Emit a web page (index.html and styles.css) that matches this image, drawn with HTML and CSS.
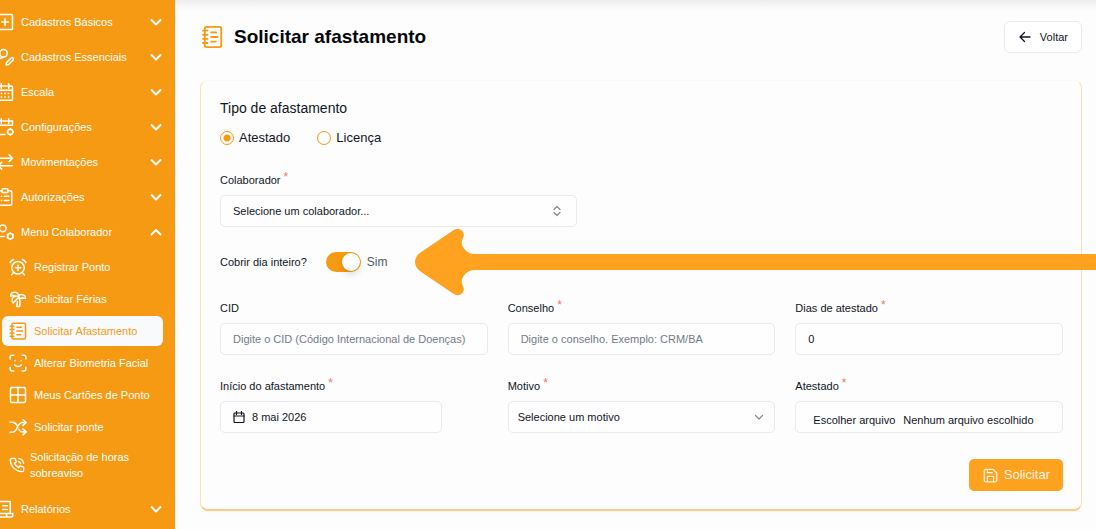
FILE: index.html
```html
<!DOCTYPE html>
<html lang="pt-BR">
<head>
<meta charset="utf-8">
<meta name="viewport" content="width=device-width, initial-scale=1">
<title>Solicitar afastamento</title>
<link rel="stylesheet" href="styles.css">
</head>
<body>
<div class="app">
  <nav class="sidebar" aria-label="Menu principal">
    <button class="group" type="button">
      <svg class="icon" viewBox="0 0 24 24"><rect x="2" y="2" width="20" height="20" rx="1.5"/><path d="M12 7.500v9M7.500 12h9"/></svg>
      <span class="group-name">Cadastros Básicos</span>
      <svg class="chevron" viewBox="0 0 12 12"><path d="M1.500 4l4.500 4.500L10.500 4"/></svg>
    </button>
    <button class="group" type="button">
      <svg class="icon" viewBox="0 0 24 24"><circle cx="10" cy="7" r="5"/><path d="M3 17c1-3 3-4 6-4"/><path d="M14 19.500l6-6a1.800 1.800 0 0 1 2.800 2.500l-6 6-3.300.8z"/></svg>
      <span class="group-name">Cadastros Essenciais</span>
      <svg class="chevron" viewBox="0 0 12 12"><path d="M1.500 4l4.500 4.500L10.500 4"/></svg>
    </button>
    <button class="group" type="button">
      <svg class="icon" viewBox="0 0 24 24"><rect x="2" y="4" width="20" height="19" rx="1.500"/><path d="M2 9.500h20M7 1v6M17 1v6M7 14h.6M11.700 14h.6M16.400 14h.6M7 18.500h.6M11.700 18.500h.6M16.400 18.500h.6"/></svg>
      <span class="group-name">Escala</span>
      <svg class="chevron" viewBox="0 0 12 12"><path d="M1.500 4l4.500 4.500L10.500 4"/></svg>
    </button>
    <button class="group" type="button">
      <svg class="icon" viewBox="0 0 24 24"><path d="M2 4h20v5.500H2zM2 9.500V22h10M7 1v6M17 1v6"/><circle cx="19" cy="18.500" r="3.400"/><path d="M19 14v1M19 22v1M14.800 18.500h.8M22.400 18.500h.8"/></svg>
      <span class="group-name">Configurações</span>
      <svg class="chevron" viewBox="0 0 12 12"><path d="M1.500 4l4.500 4.500L10.500 4"/></svg>
    </button>
    <button class="group" type="button">
      <svg class="icon" viewBox="0 0 24 24"><path d="M3 7h19M17.500 2.500L22 7l-4.500 4.500M22 17H3M7.500 12.500L3 17l4.500 4.500"/></svg>
      <span class="group-name">Movimentações</span>
      <svg class="chevron" viewBox="0 0 12 12"><path d="M1.500 4l4.500 4.500L10.500 4"/></svg>
    </button>
    <button class="group" type="button">
      <svg class="icon" viewBox="0 0 24 24"><path d="M8 3.500H5a2 2 0 0 0-2 2V21a2 2 0 0 0 2 2h14a2 2 0 0 0 2-2V5.500a2 2 0 0 0-2-2h-3"/><rect x="8" y="1" width="8" height="5" rx="1.500"/><path d="M7 11h.6M11 11h6M7 16.500h.6M11 16.500h6"/></svg>
      <span class="group-name">Autorizações</span>
      <svg class="chevron" viewBox="0 0 12 12"><path d="M1.500 4l4.500 4.500L10.500 4"/></svg>
    </button>
    <button class="group" type="button" aria-expanded="true">
      <svg class="icon" viewBox="0 0 24 24"><circle cx="9" cy="7" r="4.500"/><path d="M2 18h9"/><circle cx="19" cy="17.500" r="3.600"/><path d="M19 13v1M19 21v1M15 15.500l.8.500M22.200 19l.8.500M15 19.500l.8-.5M22.200 16l.8-.5"/></svg>
      <span class="group-name">Menu Colaborador</span>
      <svg class="chevron" viewBox="0 0 12 12"><path d="M1.500 8.500L6 4l4.500 4.500"/></svg>
    </button>
    <div class="submenu">
      <a class="item" href="#">
        <svg class="icon" viewBox="0 0 24 24"><circle cx="12" cy="13" r="8.300"/><path d="M12 9.500v7M8.500 13h7M1.500 6A10 10 0 0 1 6 2M22.500 6A10 10 0 0 0 18 2M6 19.500L3.500 22.500M18 19.500l2.500 3"/></svg>
        <span>Registrar Ponto</span>
      </a>
      <a class="item" href="#">
        <svg class="icon" viewBox="0 0 24 24"><path d="M13 8c0-2.760-2.460-5-5.500-5S2 5.240 2 8h2l1-1 1 1h4M13 7.140A5.820 5.820 0 0 1 16.500 6c3.040 0 5.500 2.240 5.500 5h-3l-1-1-1 1h-3M5.890 9.710c-2.150 2.150-2.300 5.470-.35 7.430l4.240-4.250.7-.7.710-.71 2.120-2.120c-1.950-1.960-5.270-1.800-7.420.35M11 15.500c.5 2.500-.17 4.500-1 6.500h4c2-5.500-.5-12-1-14"/></svg>
        <span>Solicitar Férias</span>
      </a>
      <a class="item item-active" href="#" aria-current="page">
        <svg class="icon" viewBox="0 0 24 24"><rect x="4" y="1.500" width="18" height="21" rx="2"/><path d="M1.500 5.500h5M1.500 10h5M1.500 14.500h5M1.500 19h5M10.500 7h6M10.500 12h7.500M10.500 17h5"/></svg>
        <span>Solicitar Afastamento</span>
      </a>
      <a class="item" href="#">
        <svg class="icon" viewBox="0 0 24 24"><path d="M1.500 6.500V4A2.500 2.500 0 0 1 4 1.500h2.500M17.500 1.500H20A2.500 2.500 0 0 1 22.500 4v2.500M22.500 17.500V20a2.500 2.500 0 0 1-2.500 2.500h-2.500M6.500 22.500H4A2.500 2.500 0 0 1 1.500 20v-2.500M7.500 14.500c2.500 3 6.500 3 9 0M8 9h.1M16 9h.1"/></svg>
        <span>Alterar Biometria Facial</span>
      </a>
      <a class="item" href="#">
        <svg class="icon" viewBox="0 0 24 24"><rect x="2" y="2" width="20" height="20" rx="2"/><path d="M12 2v20M2 12h20"/></svg>
        <span>Meus Cartões de Ponto</span>
      </a>
      <a class="item" href="#">
        <svg class="icon" viewBox="0 0 24 24"><path d="M18.500 2L23 6l-4.500 4M18.500 14.500l4.500 4-4.500 4M1.500 5.500h3c3 0 5 2 6 4M1.500 19h3C12 19 10 6 18 6h5M13 15c1 2 2.500 3.500 5 3.500h5"/></svg>
        <span>Solicitar ponte</span>
      </a>
      <a class="item item-tall" href="#">
        <svg class="icon icon-small" viewBox="0 0 24 24"><path d="M5 2h4l2 5.500-2.700 2A13 13 0 0 0 14.500 16l2-2.800 5.500 2v4.300a2.500 2.500 0 0 1-2.500 2.500C9.500 21.500 2.500 14 2 4.700A2.700 2.700 0 0 1 5 2zM14 6.500a5 5 0 0 1 3.500 3.500M14.500 2a9 9 0 0 1 7.500 7.500"/></svg>
        <span>Solicitação de horas sobreaviso</span>
      </a>
    </div>
    <button class="group" type="button">
      <svg class="icon" viewBox="0 0 24 24"><path d="M4 17V4a2 2 0 0 1 2-2h13v16M4 18h10v2a2.500 2.500 0 0 0 2.500 2.500H20a2.500 2.500 0 0 0 2.500-2.500v-2H14M16.500 22.500H5A3 3 0 0 1 2 19.500V18h2M9 7.500h6M9 12.500h6"/></svg>
      <span class="group-name">Relatórios</span>
      <svg class="chevron" viewBox="0 0 12 12"><path d="M1.500 4l4.500 4.500L10.500 4"/></svg>
    </button>
  </nav>

  <main class="main">
    <header class="header">
      <svg class="icon title-icon" viewBox="0 0 24 24"><rect x="3" y="1" width="18" height="22" rx="2"/><path d="M1 5h5M1 9.500h5M1 14h5M1 18.500h5M10 7h5.500M10 12h7M10 17h5"/></svg>
      <h1 class="title">Solicitar afastamento</h1>
      <button class="back" type="button">
        <svg class="back-icon" viewBox="0 0 12 12"><path d="M11 6H1M5.500 1.500L1 6l4.500 4.500"/></svg>
        Voltar
      </button>
    </header>

    <form class="card">
      <fieldset class="type">
        <legend class="type-title">Tipo de afastamento</legend>
        <div class="radios">
          <label class="radio"><input class="radio-input" type="radio" name="tipo" checked>Atestado</label>
          <label class="radio"><input class="radio-input" type="radio" name="tipo">Licença</label>
        </div>
      </fieldset>

      <div class="field field-employee">
        <label class="label" for="colaborador">Colaborador <span class="required">*</span></label>
        <div class="select-box">
          <select class="control" id="colaborador"><option>Selecione um colaborador...</option></select>
          <svg class="select-icon select-icon-sort" viewBox="0 0 12 12"><path d="M3 4.500l3-3 3 3M3 7.500l3 3 3-3"/></svg>
        </div>
      </div>

      <div class="switch-row">
        <label class="label" for="dia-inteiro">Cobrir dia inteiro?</label>
        <input class="switch" id="dia-inteiro" type="checkbox" role="switch" checked>
        <span class="switch-state">Sim</span>
      </div>

      <div class="grid">
        <div class="field">
          <label class="label" for="cid">CID</label>
          <input class="control" id="cid" type="text" placeholder="Digite o CID (Código Internacional de Doenças)">
        </div>
        <div class="field">
          <label class="label" for="conselho">Conselho <span class="required">*</span></label>
          <input class="control" id="conselho" type="text" placeholder="Digite o conselho. Exemplo: CRM/BA">
        </div>
        <div class="field">
          <label class="label" for="dias">Dias de atestado <span class="required">*</span></label>
          <input class="control" id="dias" type="text" inputmode="numeric" value="0">
        </div>
        <div class="field">
          <label class="label" for="inicio">Início do afastamento <span class="required">*</span></label>
          <button class="control date" id="inicio" type="button">
            <svg class="date-icon" viewBox="0 0 12 12"><rect x="1" y="2" width="10" height="9.500" rx="1"/><path d="M1 5h10M3.500.5v3M8.500.5v3"/></svg>
            8 mai 2026
          </button>
        </div>
        <div class="field">
          <label class="label" for="motivo">Motivo <span class="required">*</span></label>
          <div class="select-box">
            <select class="control control-tight" id="motivo"><option>Selecione um motivo</option></select>
            <svg class="select-icon" viewBox="0 0 12 12"><path d="M2.500 4.500L6 8l3.500-3.500"/></svg>
          </div>
        </div>
        <div class="field">
          <label class="label" for="arquivo">Atestado <span class="required">*</span></label>
          <label class="control file">
            <input class="file-input" id="arquivo" type="file">
            <span>Escolher arquivo</span>
            <span>Nenhum arquivo escolhido</span>
          </label>
        </div>
      </div>

      <button class="submit" type="submit">
        <svg class="submit-icon" viewBox="0 0 24 24"><path d="M4.500 2h11.500l6 6v11.500a2.500 2.500 0 0 1-2.500 2.500h-15A2.500 2.500 0 0 1 2 19.500v-15A2.500 2.500 0 0 1 4.500 2zM7 22v-8.500h10V22M7 2v5.500h8"/></svg>
        Solicitar
      </button>
    </form>
  </main>

  <div class="pointer" aria-hidden="true">
    <svg class="pointer-head" viewBox="0 0 60 68"><path d="M7 23.500L38 2.500Q43-1 47 2.500Q50 5.500 48 10Q45 15 49 20.500Q53 26 60 26V42Q53 42 49 47.500Q45 53 48 58Q50 62.500 47 65.500Q43 69 38 65.500L7 44.500Q0 40 0 34T7 23.500Z"/></svg>
    <div class="pointer-line"></div>
  </div>
</div>
</body>
</html>
```
FILE: styles.css
```css
* {
  box-sizing: border-box;
}

body {
  margin: 0;
  background: #fdfdfd;
  color: #11151f;
  font: 11px/14px "Liberation Sans", Arial, sans-serif;
}

button,
input,
select {
  font: inherit;
  color: inherit;
}

svg {
  flex: none;
  fill: none;
  stroke: currentColor;
  stroke-width: 2;
  stroke-linecap: round;
  stroke-linejoin: round;
}

.app {
  position: relative;
  display: flex;
  min-height: 100vh;
}

/* Sidebar */
.sidebar {
  flex: none;
  width: 175px;
  padding-top: 4px;
  overflow: hidden;
  background: #f79a13;
  color: #fff;
}

.group {
  display: flex;
  align-items: center;
  gap: 7px;
  width: 100%;
  height: 35px;
  padding: 0 13px 0 0;
  border: 0;
  background: none;
  text-align: left;
}

.icon {
  width: 18px;
  height: 18px;
}

.group .icon {
  margin-left: -4px;
}

.group-name {
  flex: 1;
}

.chevron {
  width: 12px;
  height: 12px;
}

.submenu {
  padding: 2px 12px 4px 2px;
}

.item {
  display: flex;
  align-items: center;
  gap: 7px;
  height: 32px;
  padding-left: 7px;
  border-radius: 6px;
  color: inherit;
  text-decoration: none;
  white-space: nowrap;
}

.item-active {
  height: 30px;
  margin: 1px 0;
  background: #f8fafc;
  color: #f79a13;
}

.item-tall {
  gap: 5px;
  height: 44px;
  line-height: 16px;
  white-space: normal;
}

.icon-small {
  width: 16px;
  height: 16px;
}

/* Content */
.main {
  flex: 1;
  min-width: 0;
  padding: 21px 14px 18px 25px;
  background: linear-gradient(#ededed, #fdfdfd 10px);
}

.header {
  display: flex;
  align-items: center;
  margin-bottom: 27px;
  padding-left: 2px;
}

.title-icon {
  width: 22px;
  height: 22px;
  color: #f79a13;
}

.title {
  flex: 1;
  margin: 0 0 0 10px;
  font-size: 19px;
  line-height: 24px;
  color: #05070d;
}

.back {
  display: flex;
  align-items: center;
  gap: 9px;
  height: 32px;
  padding: 0 13px 0 14px;
  border: 1px solid #e8eaf0;
  border-radius: 6px;
  background: #fff;
}

.back-icon {
  width: 12px;
  height: 12px;
  stroke-width: 1.3;
}

.card {
  display: flex;
  flex-direction: column;
  padding: 18px 18px 18px 19px;
  border: 1px solid #fee0b5;
  border-top-color: #fdf8f0;
  border-bottom: 2px solid #fdcb85;
  border-radius: 8px;
  background: #fdfdfd;
}

.type {
  margin: 0 0 25px;
  padding: 0;
  border: 0;
}

.type-title {
  padding: 0;
  font-size: 14px;
  line-height: 18px;
}

.radios {
  display: flex;
  gap: 27px;
  padding-top: 11px;
  font-size: 13px;
  line-height: 20px;
}

.radio {
  display: flex;
  align-items: center;
  gap: 5px;
}

.radio-input {
  appearance: none;
  width: 14px;
  height: 14px;
  margin: 0;
  border: 1px solid #f79a13;
  border-radius: 50%;
}

.radio-input:checked {
  background: radial-gradient(circle, #f79a13 3px, transparent 4px);
}

.field {
  display: flex;
  flex-direction: column;
  gap: 8px;
}

.field-employee {
  width: 42.3%;
}

.required {
  color: #f87171;
  font-size: 12px;
  line-height: 8px;
  vertical-align: 3px;
}

.label {
  height: 14px;
  line-height: 14px;
}

.control {
  width: 100%;
  height: 32px;
  padding: 0 12px;
  border: 1px solid #e9eaed;
  border-radius: 5px;
  background: #fefefe;
}

.control::placeholder {
  color: #737b87;
  opacity: 1;
}

.control-tight {
  padding-left: 9px;
}

.select-box {
  display: grid;
  align-items: center;
}

.select-box .control {
  grid-area: 1 / 1;
  appearance: none;
}

.select-icon {
  grid-area: 1 / 1;
  justify-self: end;
  width: 12px;
  height: 12px;
  margin-right: 10px;
  color: #85888e;
  stroke-width: 1.2;
  pointer-events: none;
}

.select-icon-sort {
  margin-right: 14px;
}

.switch-row {
  display: flex;
  align-items: center;
  height: 20px;
  margin: 25px 0 29px;
}

.switch {
  appearance: none;
  display: flex;
  justify-content: flex-end;
  width: 35px;
  height: 20px;
  margin: 0 6px 0 19px;
  padding: 1px;
  border-radius: 10px;
  background: #f79a13;
}

.switch::before {
  content: "";
  width: 18px;
  height: 18px;
  border-radius: 50%;
  background: #fff;
  box-shadow: 0 4px 6px rgba(0, 0, 0, 0.12);
}

.switch-state {
  font-size: 12px;
  color: #4d5a6b;
}

.grid {
  display: grid;
  grid-template-columns: repeat(3, minmax(0, 1fr));
  gap: 24px 20px;
  margin-bottom: 26px;
}

.date {
  display: flex;
  align-items: center;
  gap: 7px;
  width: 83%;
}

.date-icon {
  width: 12px;
  height: 12px;
  stroke-width: 1.2;
}

.file {
  display: flex;
  align-items: center;
  gap: 8px;
  padding: 6px 17px 0;
  white-space: nowrap;
}

.file-input {
  position: absolute;
  width: 1px;
  height: 1px;
  opacity: 0;
}

.submit {
  display: flex;
  align-self: flex-end;
  align-items: center;
  gap: 6px;
  height: 32px;
  padding: 0 13px 0 14px;
  border: 0;
  border-radius: 5px;
  background: #ffa220;
  color: #fff4e0;
  font-size: 13px;
}

.submit-icon {
  width: 15px;
  height: 15px;
}

/* Callout arrow laid over the form */
.pointer {
  position: absolute;
  top: 228px;
  right: 0;
  left: 415px;
  display: flex;
  align-items: center;
  pointer-events: none;
}

.pointer-head {
  width: 60px;
  height: 68px;
  fill: #ffa220;
  stroke: none;
}

.pointer-line {
  flex: 1;
  height: 16px;
  background: #ffa220;
}
```
